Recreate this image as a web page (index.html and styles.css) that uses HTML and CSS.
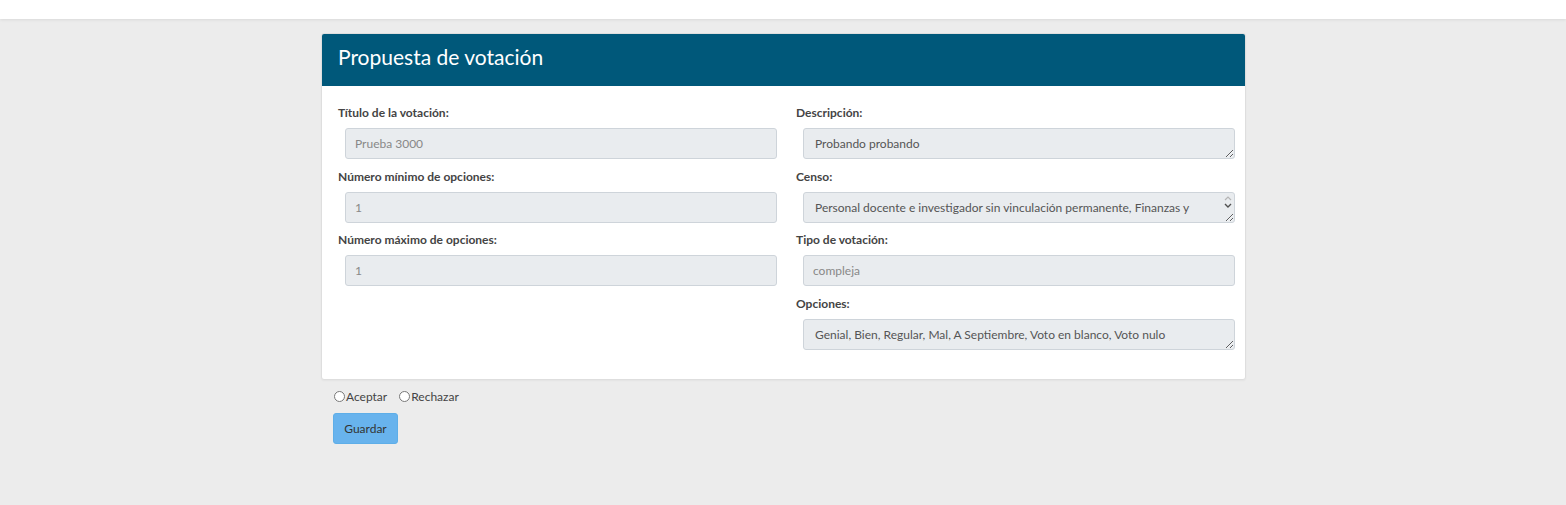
FILE: index.html
```html
<!DOCTYPE html>
<html lang="es">
<head>
<meta charset="utf-8">
<title>Propuesta de votación</title>
<link rel="stylesheet" href="styles.css">
</head>
<body>
<header class="topbar"></header>
<main class="page">
  <section class="card">
    <div class="card-header">Propuesta de votación</div>
    <div class="card-body">
      <div class="col">
        <div class="field">
          <label class="lbl">Título de la votación:</label>
          <input class="ctl" type="text" value="Prueba 3000" disabled>
        </div>
        <div class="field">
          <label class="lbl">Número mínimo de opciones:</label>
          <input class="ctl" type="text" value="1" disabled>
        </div>
        <div class="field">
          <label class="lbl">Número máximo de opciones:</label>
          <input class="ctl" type="text" value="1" disabled>
        </div>
      </div>
      <div class="col">
        <div class="field">
          <label class="lbl">Descripción:</label>
          <textarea class="ctl ta" readonly>Probando probando</textarea>
        </div>
        <div class="field">
          <label class="lbl">Censo:</label>
          <div class="ta-wrap">
            <textarea class="ctl ta" readonly>Personal docente e investigador sin vinculación permanente, Finanzas y Contabilidad, Personal de administración y servicios</textarea>
            <span class="scroll-arrows" aria-hidden="true">
              <svg width="8" height="5" viewBox="0 0 8 5"><path d="M1 4 L4 1 L7 4" fill="none" stroke="#b5b5b5" stroke-width="1.2"/></svg>
              <svg width="8" height="5" viewBox="0 0 8 5"><path d="M1 1 L4 4 L7 1" fill="none" stroke="#505050" stroke-width="1.4"/></svg>
            </span>
          </div>
        </div>
        <div class="field">
          <label class="lbl">Tipo de votación:</label>
          <input class="ctl" type="text" value="compleja" disabled>
        </div>
        <div class="field">
          <label class="lbl">Opciones:</label>
          <textarea class="ctl ta" readonly>Genial, Bien, Regular, Mal, A Septiembre, Voto en blanco, Voto nulo</textarea>
        </div>
      </div>
    </div>
  </section>
  <form class="actions">
    <div class="radios">
      <label class="radio"><input type="radio" name="decision">Aceptar</label>
      <label class="radio"><input type="radio" name="decision">Rechazar</label>
    </div>
    <button type="button" class="btn">Guardar</button>
  </form>
</main>
</body>
</html>
```

FILE: styles.css
```css
* { box-sizing: border-box; }
html, body { margin: 0; padding: 0; }
body {
  background: #ececec;
  font-family: Lato, "Open Sans", "Liberation Sans", sans-serif;
  color: #444;
  min-height: 505px;
}
.topbar {
  height: 19px;
  background: #fff;
  box-shadow: 0 1px 3px rgba(0,0,0,0.08);
}
.page {
  width: 925px;
  margin: 14px 0 0 321px;
}
.card {
  background: #fff;
  border: 1px solid #dedede;
  border-radius: 3px;
  box-shadow: 0 1px 2px rgba(0,0,0,0.04);
  height: 347px;
  overflow: hidden;
}
.card-header {
  background: #00587a;
  color: #fff;
  height: 53px;
  padding: 0 17px;
  font-size: 21px;
  line-height: 47px;
  margin: -1px -1px 0 -1px;
  border-radius: 3px 3px 0 0;
}
.card-body {
  display: grid;
  grid-template-columns: 439px 439px;
  column-gap: 19px;
  padding: 20px 10px 0 16px;
}
.col { display: flex; flex-direction: column; }
.field { display: flex; flex-direction: column; height: 63.5px; }
.lbl {
  font-size: 12px;
  font-weight: bold;
  color: #444;
  line-height: 14px;
  height: 22px;
}
.ctl {
  margin-left: 7px;
  width: 432px;
  height: 31px;
  background: #e9ecef;
  border: 1px solid #ced4da;
  border-radius: 3px;
  font-family: inherit;
  font-size: 12px;
  color: #888;
  padding: 0 10px 0 9px;
  outline: none;
}
.ta {
  display: block;
  resize: vertical;
  color: #555;
  padding: 0 11px 0 11px;
  line-height: 29px;
  overflow: hidden;
}
.ta-wrap { position: relative; }
.ta-wrap .ta { padding-right: 30px; }
.scroll-arrows {
  position: absolute;
  top: 4px;
  right: 3px;
  width: 8px;
  display: flex;
  flex-direction: column;
  gap: 2px;
}
.scroll-arrows svg { display: block; }
.actions {
  padding: 9px 0 0 12px;
}
.radios {
  display: flex;
  gap: 12px;
  padding-left: 1px;
  font-size: 12px;
  color: #444;
  height: 15px;
  align-items: center;
}
.radio { display: flex; align-items: center; }
.radio input {
  margin: 0 1px 0 0;
  width: 11px;
  height: 11px;
}
.btn {
  display: block;
  margin-top: 9px;
  height: 31px;
  width: 65px;
  background: #68b3ed;
  border: 1px solid #5eaee8;
  border-radius: 3px;
  color: #333;
  font-family: inherit;
  font-size: 12px;
  padding: 0;
}
```
